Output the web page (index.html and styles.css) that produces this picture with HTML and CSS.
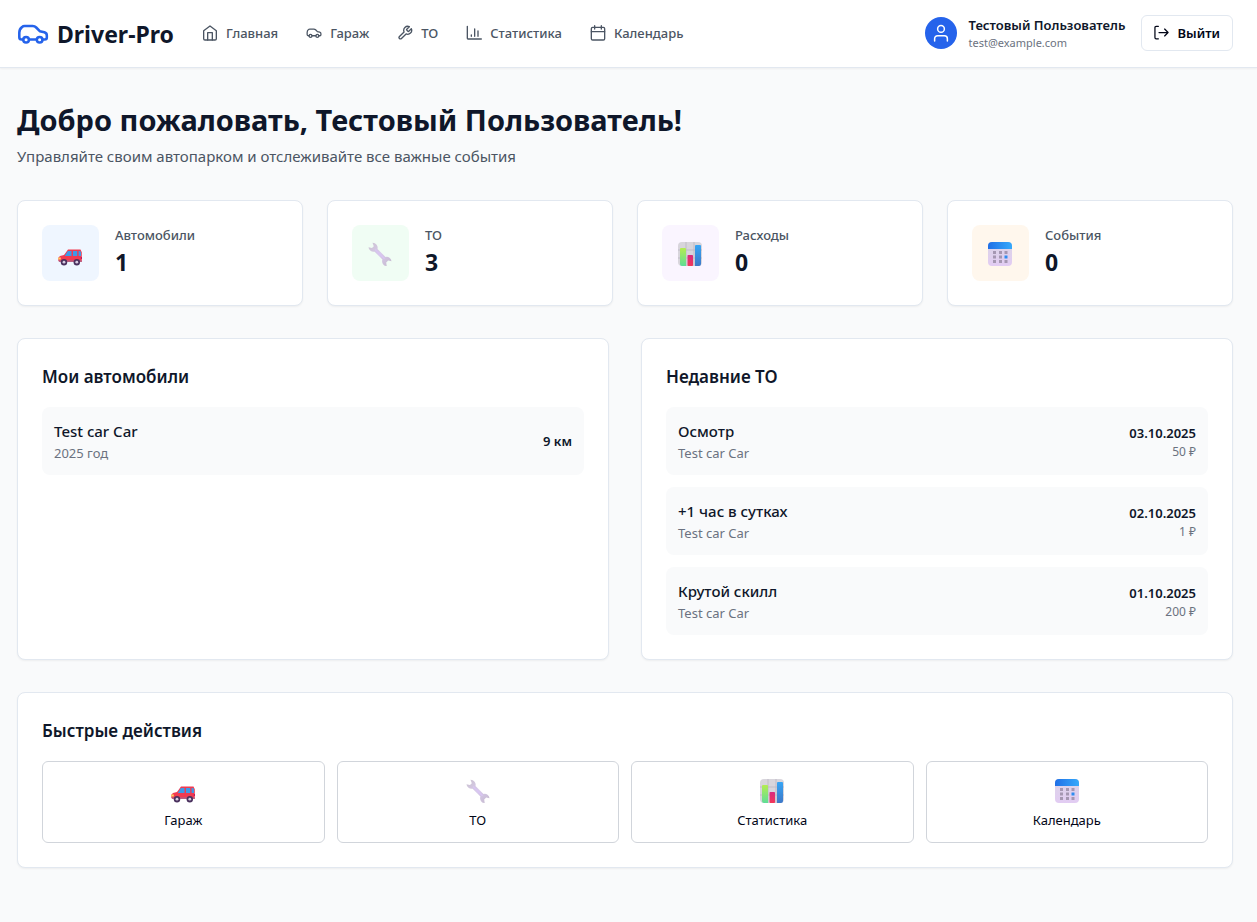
FILE: index.html
```html
<!DOCTYPE html>
<html lang="ru">
<head>
<meta charset="utf-8">
<meta name="viewport" content="width=device-width, initial-scale=1">
<title>Driver-Pro</title>
<link rel="stylesheet" href="styles.css">
</head>
<body>
<svg class="sprite" aria-hidden="true">
  <defs>
    <linearGradient id="gGreen" x1="0" y1="0" x2="0" y2="1"><stop offset="0" stop-color="#b4ec51"/><stop offset="1" stop-color="#5fdd97"/></linearGradient>
    <linearGradient id="gRed" x1="0" y1="0" x2="0" y2="1"><stop offset="0" stop-color="#d82a80"/><stop offset="1" stop-color="#f23758"/></linearGradient>
    <linearGradient id="gBlue" x1="0" y1="0" x2="0" y2="1"><stop offset="0" stop-color="#36a5f5"/><stop offset="1" stop-color="#3e78c8"/></linearGradient>
    <linearGradient id="gHead" x1="0" y1="0" x2="1" y2="0"><stop offset="0" stop-color="#1f6fe6"/><stop offset="1" stop-color="#35a9fb"/></linearGradient>
    <linearGradient id="gPage" x1="0" y1="0" x2="0" y2="1"><stop offset="0" stop-color="#dbd5e6"/><stop offset="1" stop-color="#e2ccf3"/></linearGradient>
    <linearGradient id="gTool" x1="0" y1="0" x2="1" y2="1"><stop offset="0" stop-color="#cbc3d0"/><stop offset=".5" stop-color="#d8caec"/><stop offset="1" stop-color="#c4b9cc"/></linearGradient>
  </defs>
  <symbol id="car" viewBox="-0.500 0.200 25 25">
    <path d="M4.200 17H3.100c-1 0-1.800-.8-1.800-1.800v-3.400c0-1.800.9-3.700 2.100-4.500.5-.5 1.100-.8 2-.8h6.300c1.100 0 2 .3 2.800 1.100l2.800 2.900 3.600.9c1.200.4 1.900 1.200 1.900 2.400v1.700c0 1-.7 1.500-1.600 1.500h-1.700M9 17h5.800"/>
    <circle cx="6.600" cy="17.200" r="2.200"/><circle cx="17.200" cy="17.200" r="2.200"/>
  </symbol>
  <symbol id="home" viewBox="0 0 24 24"><path d="M2.500 8.500 12 1.500l9.500 7V20.500a2 2 0 0 1-2 2h-15a2 2 0 0 1-2-2z"/><path d="M8.500 22.500V11.500h7v11"/></symbol>
  <symbol id="wrench" viewBox="0 0 24 24"><path d="M14.700 6.300a1 1 0 0 0 0 1.400l1.600 1.600a1 1 0 0 0 1.400 0l3.800-3.800a6 6 0 0 1-7.900 7.900l-6.900 6.900a2.100 2.100 0 0 1-3-3l6.900-6.900a6 6 0 0 1 7.900-7.900z"/></symbol>
  <symbol id="chart" viewBox="0 0 24 24"><path d="M2 2v18a1 1 0 0 0 1 1h20M8 17v-2M13 17V6M18 17V9"/></symbol>
  <symbol id="calendar" viewBox="0 0 24 24"><path d="M7 1v5M17 1v5M2 10h20"/><rect x="2" y="3.500" width="20" height="19" rx="2"/></symbol>
  <symbol id="user" viewBox="0 0 24 24"><circle cx="12" cy="6.500" r="4.500"/><path d="M3.500 22.500v-3a4 4 0 0 1 4-4h9a4 4 0 0 1 4 4v3"/></symbol>
  <symbol id="logout" viewBox="0 0 24 24"><path d="M7 22H3.500a2 2 0 0 1-2-2V4a2 2 0 0 1 2-2H7M17 17.500l5.500-5.500L17 6.500M22.500 12H8"/></symbol>

  <symbol id="emoji-car" viewBox="0 -3 24 24">
    <path d="M7.500 8 10 4.500h12.500l1.300 2.800V17H1.500L.3 15.500v-2.700L2 11l4-1z" fill="#f13a51"/>
    <path d="M9.800 6h3.700v5H6.800zM15 6h4.200v5H15zM20.600 6h1.700l.7 1.800V11h-2.400z" fill="#3e9ae8"/>
    <path d="M.3 15.500h23.500v1.300H1z" fill="#a46b92"/>
    <path d="M.4 12.600h2.400v2H.3z" fill="#ffd45d"/>
    <path d="M22.800 12h1.200v2h-1.200z" fill="#bb1c60"/>
    <circle cx="6" cy="17.200" r="3.200" fill="#4a315e"/><circle cx="18.800" cy="17.200" r="3.200" fill="#4a315e"/>
    <circle cx="6" cy="17.200" r="1.400" fill="#d6cce1"/><circle cx="18.800" cy="17.200" r="1.400" fill="#d6cce1"/>
  </symbol>
  <symbol id="emoji-wrench" viewBox="0 0 24 24">
    <path d="M4.500.8a5 5 0 0 1 5 6.300l8 7.800a4.800 4.800 0 0 1 6 4.300l-3.300-.6-2 2 .5 3.500a4.900 4.900 0 0 1-4.300-6.600L6.600 9.700A5 5 0 0 1 .5 5.200L4 6l1.800-1.800z" fill="url(#gTool)"/>
    <path d="m7 7.500 9.500 9.300" stroke="#d9c5f4" stroke-width="1.200"/>
  </symbol>
  <symbol id="emoji-chart" viewBox="0 0 24 24">
    <rect width="24" height="24" rx="4" fill="#d8d5dc"/>
    <path d="M8 0v24M16 0v24M0 8h24M0 16h24" stroke="#bbb6c2" stroke-width=".8"/>
    <path d="M2 7q0-1 1-1h4q1 0 1 1v17H4q-2 0-2-2z" fill="url(#gGreen)"/>
    <rect x="9.500" y="13" width="5.500" height="11" rx=".8" fill="url(#gRed)"/>
    <path d="M17 4q0-1 1-1h4q1 0 1 1v18q0 2-2 2h-4z" fill="url(#gBlue)"/>
  </symbol>
  <symbol id="emoji-calendar" viewBox="0 0 24 24">
    <rect width="24" height="24" rx="4" fill="url(#gPage)"/>
    <path d="M0 7V4a4 4 0 0 1 4-4h16a4 4 0 0 1 4 4v3z" fill="url(#gHead)"/>
    <path d="M5 9h3v3H5zm6 0h3v3h-3zm5.500 0h3v3h-3zM5 13.500h3v3H5zm6 0h3v3h-3zM5 18h3v3H5zm6 0h3v3h-3zm5.500 0h3v3h-3z" fill="#a597b2"/>
    <path d="M16.500 13.500h3v3h-3z" fill="#2e8cf0"/>
  </symbol>
</svg>

<header class="header">
  <div class="container header-row">
    <a class="brand" href="#"><svg class="icon brand-icon"><use href="#car"/></svg>Driver-Pro</a>
    <nav class="nav">
      <a href="#"><svg class="icon"><use href="#home"/></svg>Главная</a>
      <a href="#"><svg class="icon"><use href="#car"/></svg>Гараж</a>
      <a href="#"><svg class="icon"><use href="#wrench"/></svg>ТО</a>
      <a href="#"><svg class="icon"><use href="#chart"/></svg>Статистика</a>
      <a href="#"><svg class="icon"><use href="#calendar"/></svg>Календарь</a>
    </nav>
    <div class="account">
      <span class="avatar"><svg class="icon"><use href="#user"/></svg></span>
      <div class="account-text"><div class="account-name">Тестовый Пользователь</div><div class="account-mail">test@example.com</div></div>
      <button class="logout" type="button"><svg class="icon"><use href="#logout"/></svg>Выйти</button>
    </div>
  </div>
</header>

<main class="container main">
  <section class="welcome">
    <h1>Добро пожаловать, Тестовый Пользователь!</h1>
    <p>Управляйте своим автопарком и отслеживайте все важные события</p>
  </section>

  <section class="stats">
    <div class="card stat"><span class="tile tile-blue"><svg class="emoji"><use href="#emoji-car"/></svg></span><div class="stat-text"><div class="stat-label">Автомобили</div><div class="stat-value">1</div></div></div>
    <div class="card stat"><span class="tile tile-green"><svg class="emoji"><use href="#emoji-wrench"/></svg></span><div class="stat-text"><div class="stat-label">ТО</div><div class="stat-value">3</div></div></div>
    <div class="card stat"><span class="tile tile-purple"><svg class="emoji"><use href="#emoji-chart"/></svg></span><div class="stat-text"><div class="stat-label">Расходы</div><div class="stat-value">0</div></div></div>
    <div class="card stat"><span class="tile tile-orange"><svg class="emoji"><use href="#emoji-calendar"/></svg></span><div class="stat-text"><div class="stat-label">События</div><div class="stat-value">0</div></div></div>
  </section>

  <div class="panels">
    <section class="card">
      <h2>Мои автомобили</h2>
      <ul class="list">
        <li class="item"><div><div class="item-title">Test car Car</div><div class="item-sub">2025 год</div></div><div class="item-strong">9 км</div></li>
      </ul>
    </section>
    <section class="card">
      <h2>Недавние ТО</h2>
      <ul class="list">
        <li class="item"><div><div class="item-title">Осмотр</div><div class="item-sub">Test car Car</div></div><div class="item-end"><div class="item-strong">03.10.2025</div><div class="item-price">50 ₽</div></div></li>
        <li class="item"><div><div class="item-title">+1 час в сутках</div><div class="item-sub">Test car Car</div></div><div class="item-end"><div class="item-strong">02.10.2025</div><div class="item-price">1 ₽</div></div></li>
        <li class="item"><div><div class="item-title">Крутой скилл</div><div class="item-sub">Test car Car</div></div><div class="item-end"><div class="item-strong">01.10.2025</div><div class="item-price">200 ₽</div></div></li>
      </ul>
    </section>
  </div>

  <section class="card">
    <h2>Быстрые действия</h2>
    <div class="actions">
      <button type="button"><svg class="emoji"><use href="#emoji-car"/></svg>Гараж</button>
      <button type="button"><svg class="emoji"><use href="#emoji-wrench"/></svg>ТО</button>
      <button type="button"><svg class="emoji"><use href="#emoji-chart"/></svg>Статистика</button>
      <button type="button"><svg class="emoji"><use href="#emoji-calendar"/></svg>Календарь</button>
    </div>
  </section>
</main>
</body>
</html>
```
FILE: styles.css
```css
* { box-sizing: border-box; }
body {
  margin: 0;
  background: #f9fafb;
  color: #0f172a;
  font-family: "Segoe UI", "Noto Sans", sans-serif;
  font-size: 16px;
  line-height: 24px;
}
h1, h2, p, ul { margin: 0; padding: 0; }
a { color: inherit; text-decoration: none; }
button { font: inherit; color: #020617; background: #fff; cursor: pointer; }
.sprite { position: absolute; width: 0; height: 0; }
.container { padding: 0 24px 0 17px; }

.icon {
  width: 16px;
  height: 16px;
  flex: none;
  fill: none;
  stroke: currentColor;
  stroke-width: 2;
  stroke-linecap: round;
  stroke-linejoin: round;
}
.emoji { width: 24px; height: 24px; flex: none; }

.header {
  background: #fff;
  border-bottom: 1px solid #e2e8f0;
  box-shadow: 0 1px 2px rgba(0, 0, 0, .05);
}
.header-row { display: flex; align-items: center; min-height: 67px; padding-bottom: 2px; }
.brand { display: flex; align-items: center; gap: 8px; padding-top: 2px; font-size: 23px; line-height: 32px; font-weight: 700; }
.brand-icon { width: 32px; height: 32px; }
.brand-icon { color: #2563eb; }
.nav { display: flex; gap: 28px; margin-left: 28px; color: #4b5563; font-size: 13px; line-height: 20px; font-weight: 500; }
.nav a { display: flex; align-items: center; gap: 8px; }
.account { display: flex; align-items: center; margin-left: auto; }
.avatar { display: flex; align-items: center; justify-content: center; width: 32px; height: 32px; margin-right: 12px; border-radius: 50%; background: #2563eb; color: #fff; }
.avatar .icon { width: 18px; height: 18px; }
.account-name { font-size: 13px; line-height: 20px; font-weight: 600; }
.account-mail { font-size: 11px; line-height: 16px; color: #6b7280; }
.logout { display: flex; align-items: center; gap: 8px; height: 36px; margin-left: 16px; padding: 0 12px; border: 1px solid #e2e8f0; border-radius: 6px; font-size: 13px; font-weight: 600; }
.logout .icon { width: 15px; height: 15px; }

.main { padding-top: 32px; padding-bottom: 53px; }
.welcome { margin-bottom: 33px; }
h1 { font-size: 29px; line-height: 36px; font-weight: 700; margin-bottom: 7px; padding-top: 2px; }
.welcome p { font-size: 15px; line-height: 22px; color: #4b5563; }
.card { padding: 24px; background: #fff; border: 1px solid #e2e8f0; border-radius: 8px; box-shadow: 0 1px 2px rgba(0, 0, 0, .05); }
.stats { display: grid; grid-template-columns: repeat(4, 1fr); gap: 24px; margin-bottom: 32px; }
.stat { display: flex; align-items: center; gap: 16px; }
.tile { display: flex; padding: 17px 17px 15px 16px; border-radius: 8px; }
.tile-blue { background: #eff6ff; }
.tile-green { background: #f0fdf4; }
.tile-purple { background: #faf5ff; }
.tile-orange { background: #fff7ed; }
.stat-text { padding-bottom: 3px; }
.stat-label { margin-bottom: 1px; font-size: 13px; line-height: 20px; font-weight: 500; color: #4b5563; }
.stat-value { font-size: 23px; line-height: 32px; font-weight: 700; }

.panels { display: grid; grid-template-columns: 1fr 1fr; gap: 32px; margin-bottom: 32px; }
h2 { font-size: 17px; line-height: 28px; font-weight: 600; margin-bottom: 16px; }
.list { display: grid; gap: 12px; list-style: none; }
.item { display: flex; align-items: center; justify-content: space-between; padding: 12px; border-radius: 8px; background: #f9fafb; }
.item-title { font-size: 15px; line-height: 24px; font-weight: 500; }
.item-sub { font-size: 13px; line-height: 20px; color: #6b7280; }
.item-strong { font-size: 13px; line-height: 20px; font-weight: 600; }
.item-end { text-align: right; }
.item-price { font-size: 12px; line-height: 17px; color: #6b7280; }

.actions { display: grid; grid-template-columns: repeat(4, 1fr); gap: 12px; }
.actions button { display: flex; flex-direction: column; align-items: center; gap: 7px; padding: 17px 16px 12px; border: 1px solid #d1d5db; border-radius: 6px; font-size: 13px; line-height: 20px; font-weight: 400; }
```
